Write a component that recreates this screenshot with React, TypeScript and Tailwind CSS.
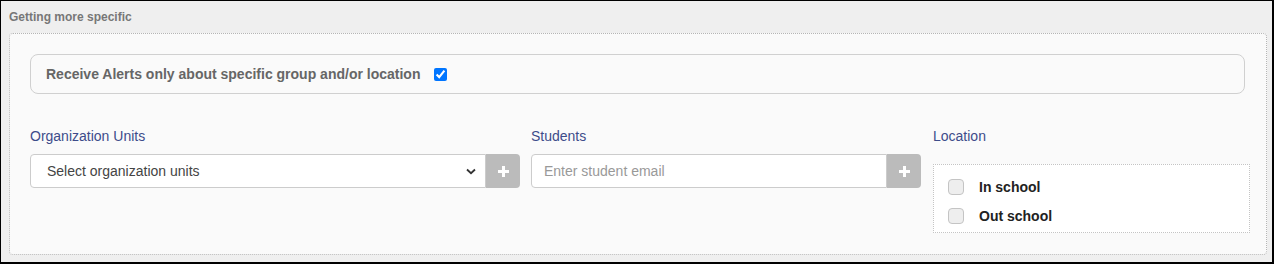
import React from "react"

function PlusButton() {
    return (
        <div className="w-[34px] h-[34px] bg-[#bbbbbb] rounded-r-[4px] flex items-center justify-center shrink-0">
            <svg width="11" height="11" viewBox="0 0 11 11">
                <rect x="4" y="0" width="3" height="11" fill="#fff" />
                <rect x="0" y="4" width="11" height="3" fill="#fff" />
            </svg>
        </div>
    )
}

function Box({ label }: { label: string }) {
    return (
        <div className="flex items-center h-[16px]">
            <span className="w-[16px] h-[16px] rounded-[4px] border border-[#c4c4c4] bg-[#eeeeee] shrink-0" />
            <span className="ml-[15px] text-[14px] font-bold text-[#222]">{label}</span>
        </div>
    )
}

export default function App() {
    return (
        <div className="w-[1274px] h-[264px] bg-[#efefef] border border-black border-r-2 border-b-2 font-['Liberation_Sans',Arial,sans-serif]">

            {/* header */}
            <div className="h-[32px] pl-[8px] pt-[9px] text-[12px] leading-[15px] font-bold text-[#777]">
                Getting more specific
            </div>

            <div className="ml-[8px] w-[1258px] h-[222px] border border-dotted border-[#b5b5b5] rounded-[4px] bg-[#fafafa] pt-[20px] pl-[20px]">

                {/* alert toggle */}
                <div className="w-[1215px] h-[40px] border border-[#d0d0d0] rounded-[8px] flex items-center pl-[15px]">
                    <span className="text-[14px] font-bold text-[#666]">Receive Alerts only about specific group and/or location</span>
                    <input type="checkbox" defaultChecked className="ml-[14px] w-[13px] h-[13px] accent-[#0075ff]" />
                </div>

                <div className="flex mt-[32px]">

                    {/* org units */}
                    <div className="w-[490px]">
                        <div className="h-[20px] text-[14px] leading-[20px] text-[#3d4c8a]">Organization Units</div>
                        <div className="flex mt-[8px]">
                            <div className="flex-1 h-[34px] bg-white border border-[#cccccc] rounded-l-[4px] flex items-center pl-[16px] pr-[9px]">
                                <span className="flex-1 text-[14px] text-[#444]">Select organization units</span>
                                <svg width="10" height="7" viewBox="0 0 10 7">
                                    <path d="M1 1.5 L5 5.2 L9 1.5" fill="none" stroke="#333" strokeWidth="1.8" />
                                </svg>
                            </div>
                            <PlusButton />
                        </div>
                    </div>

                    {/* students */}
                    <div className="w-[390px] ml-[11px]">
                        <div className="h-[20px] text-[14px] leading-[20px] text-[#3d4c8a]">Students</div>
                        <div className="flex mt-[8px]">
                            <div className="flex-1 h-[34px] bg-white border border-[#cccccc] rounded-l-[4px] flex items-center pl-[12px]">
                                <span className="text-[14px] text-[#999]">Enter student email</span>
                            </div>
                            <PlusButton />
                        </div>
                    </div>

                    {/* location */}
                    <div className="w-[317px] ml-[12px]">
                        <div className="h-[20px] text-[14px] leading-[20px] text-[#3d4c8a]">Location</div>
                        <div className="mt-[18px] h-[69px] bg-white border border-dotted border-[#c4c4c4] pl-[14px] pt-[14px] flex flex-col gap-[13px]">
                            <Box label="In school" />
                            <Box label="Out school" />
                        </div>
                    </div>

                </div>
            </div>
        </div>
    )
}
